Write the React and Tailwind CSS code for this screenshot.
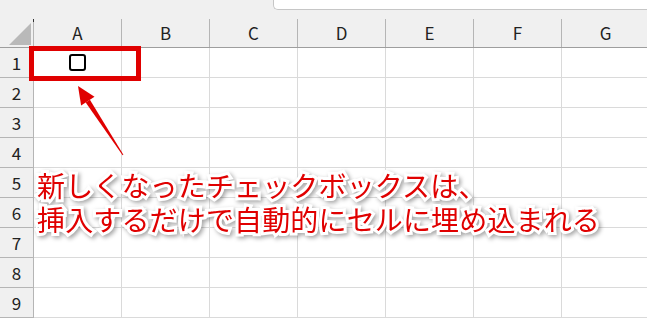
import React from 'react';

const cols = ['A', 'B', 'C', 'D', 'E', 'F', 'G'];
const rows = [1, 2, 3, 4, 5, 6, 7, 8, 9];

const font = { fontFamily: '"Noto Sans CJK JP", "Noto Sans", sans-serif' };

const App = () => {
  return (
    <div className="relative w-[647px] h-[320px] overflow-hidden bg-white" style={font}>
      {/* top strip with formula bar edge */}
      <div className="flex h-[19px] bg-[#f0f0f0]">
        <div className="w-[273px] shrink-0" />
        <div className="flex-1 h-[10px] bg-white border-l border-b border-[#c6c6c6] rounded-bl-[5px]" />
      </div>

      {/* column headers */}
      <div className="flex h-[29px] bg-[#f0f0f0] border-b border-[#9e9e9e]">
        <div className="relative w-[34px] shrink-0 border-r border-[#b5b5b5]">
          <div className="absolute left-[9px] top-[4px] w-0 h-0 border-l-[22px] border-l-transparent border-b-[22px] border-b-[#b9b9b9]" />
          <div className="absolute right-[-1px] top-0 w-[1px] h-[3px] bg-[#333]" />
        </div>
        {cols.map((c) => (
          <div
            key={c}
            className="w-[88px] shrink-0 flex items-center justify-center text-[17px] text-[#222] border-r border-[#b5b5b5]"
          >
            {c}
          </div>
        ))}
      </div>

      {/* rows */}
      {rows.map((r) => (
        <div key={r} className="flex h-[30px]">
          <div className="w-[34px] shrink-0 flex items-center justify-center text-[17px] text-[#222] bg-[#f0f0f0] border-r border-b border-[#b5b5b5]">
            {r}
          </div>
          {cols.map((c) => (
            <div key={c} className="w-[88px] shrink-0 border-r border-b border-[#dadada] flex items-center justify-center">
              {r === 1 && c === 'A' && (
                <div className="w-[17px] h-[17px] border-2 border-black rounded-[3px] bg-white" />
              )}
            </div>
          ))}
        </div>
      ))}

      {/* red highlight around A1 */}
      <div className="absolute left-[29px] top-[46px] w-[112px] h-[35px] border-[5px] border-[#e00000]" />

      {/* arrow */}
      <svg className="absolute left-0 top-0" width="647" height="320">
        <polygon points="78,86 94.5,96.7 81.1,105.5" fill="#e00000" />
        <polygon points="89.9,99.7 85.7,102.5 122.6,155.3 123.4,154.7" fill="#e00000" />
      </svg>

      {/* annotation */}
      <div className="absolute left-[37px] top-[168px] text-[28px] leading-[34px] text-[#e00000] tracking-[0.15px] [paint-order:stroke_fill] [-webkit-text-stroke:6px_white] drop-shadow-[2px_2px_2px_rgba(0,0,0,0.35)] whitespace-nowrap">
        <div>新しくなったチェックボックスは、</div>
        <div>挿入するだけで自動的にセルに埋め込まれる</div>
      </div>
    </div>
  );
};

export default App;
